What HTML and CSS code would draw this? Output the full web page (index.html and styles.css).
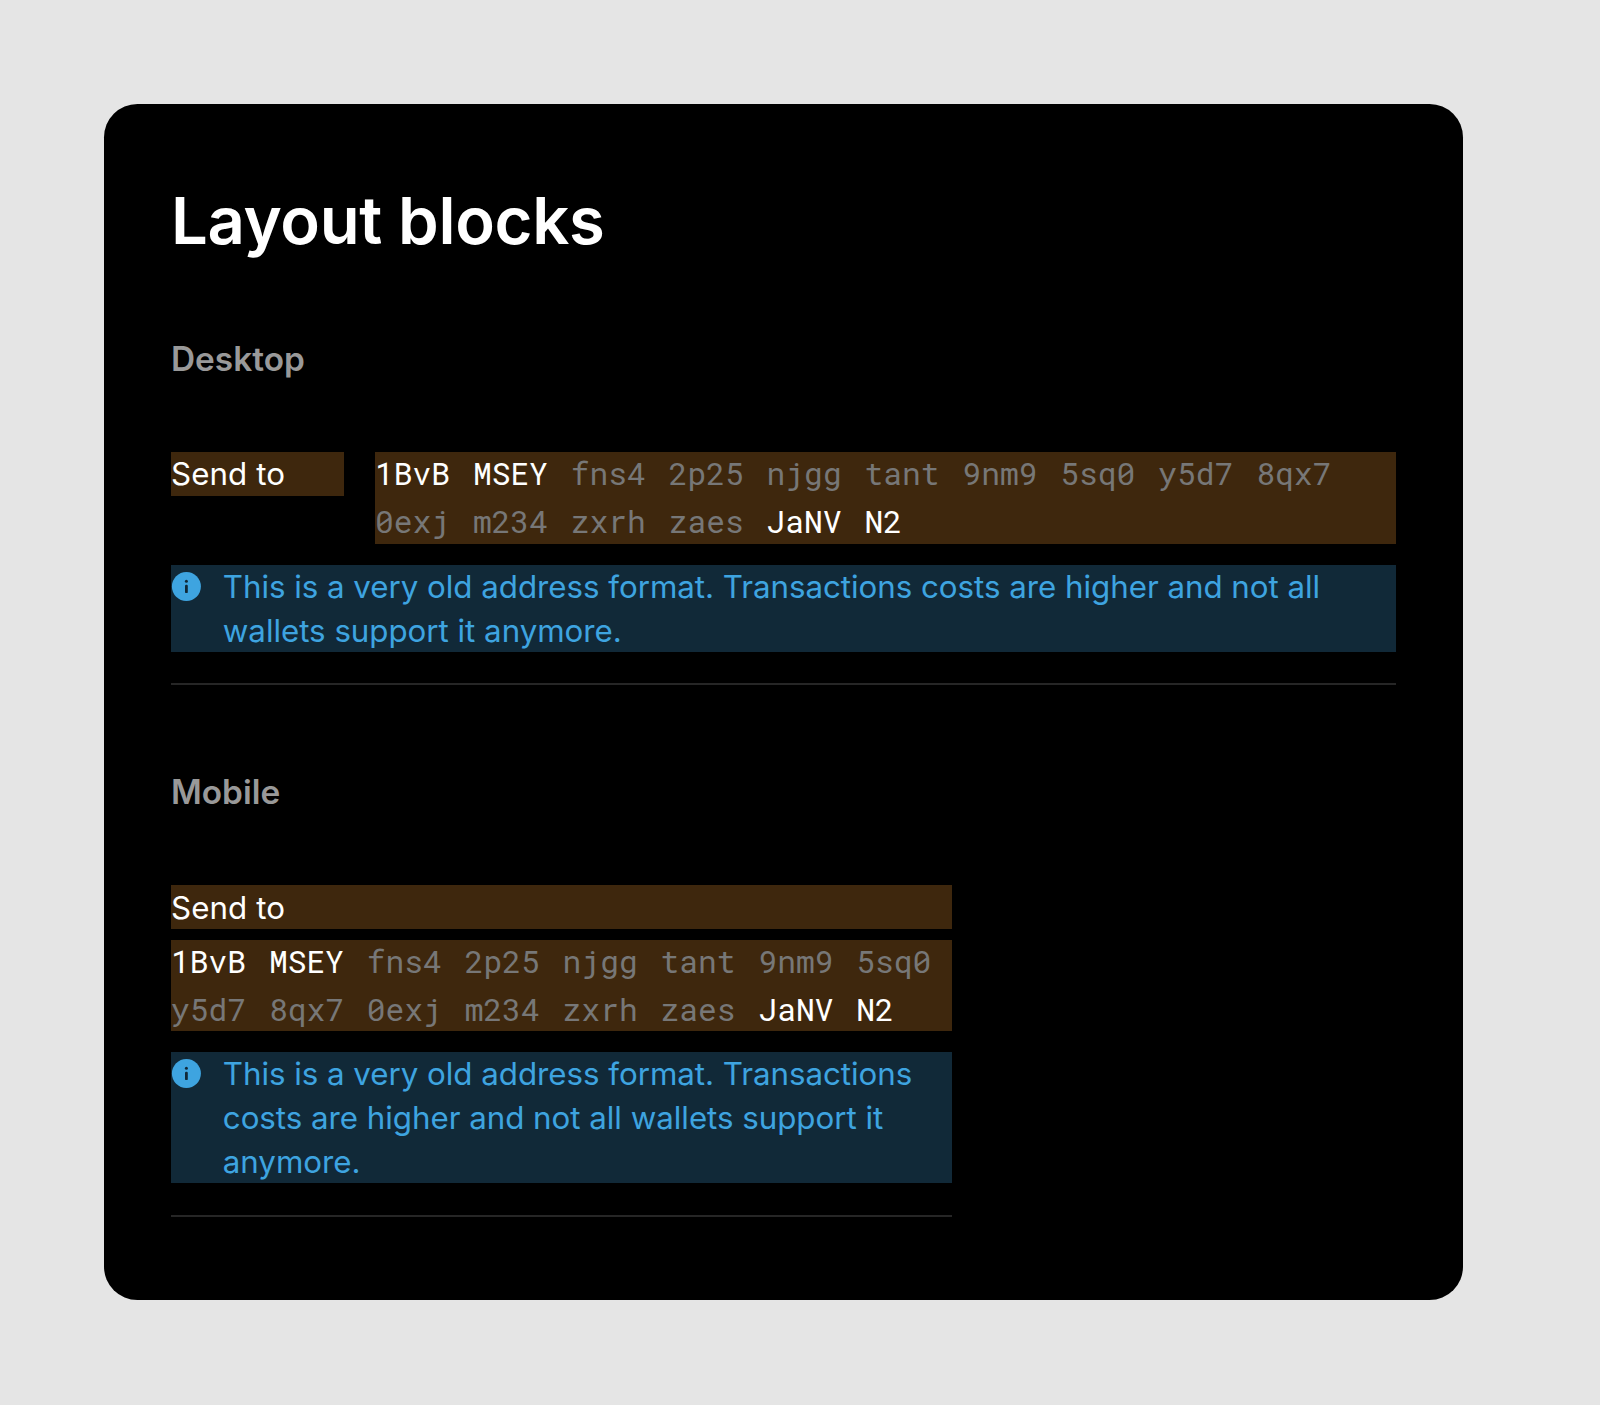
FILE: index.html
```html
<!DOCTYPE html>
<html lang="en">
<head>
<meta charset="utf-8">
<title>Layout blocks</title>
<link rel="stylesheet" href="styles.css">
</head>
<body>
<main class="card">
  <h1 class="title">Layout blocks</h1>

  <section class="block desktop">
    <h2 class="heading">Desktop</h2>
    <div class="row">
      <div class="label">Send to</div>
      <div class="address">
        <span class="strong">1BvB</span><span class="strong">MSEY</span><span>fns4</span><span>2p25</span><span>njgg</span><span>tant</span><span>9nm9</span><span>5sq0</span><span>y5d7</span><span>8qx7</span><span>0exj</span><span>m234</span><span>zxrh</span><span>zaes</span><span class="strong">JaNV</span><span class="strong">N2</span>
      </div>
    </div>
    <div class="note">
      <svg class="icon" viewBox="0 0 30 30" aria-hidden="true"><circle cx="15.4" cy="14.6" r="14.5" fill="#3ea4e0"/><circle cx="15.4" cy="9.2" r="1.5" fill="#112938"/><rect x="14" y="12.8" width="2.8" height="8.3" rx="1.2" fill="#112938"/></svg>
      <p class="message">This is a very old address format. Transactions costs are higher and not all wallets support it anymore.</p>
    </div>
  </section>

  <section class="block mobile">
    <h2 class="heading">Mobile</h2>
    <div class="row">
      <div class="label">Send to</div>
      <div class="address">
        <span class="strong">1BvB</span><span class="strong">MSEY</span><span>fns4</span><span>2p25</span><span>njgg</span><span>tant</span><span>9nm9</span><span>5sq0</span><span>y5d7</span><span>8qx7</span><span>0exj</span><span>m234</span><span>zxrh</span><span>zaes</span><span class="strong">JaNV</span><span class="strong">N2</span>
      </div>
    </div>
    <div class="note">
      <svg class="icon" viewBox="0 0 30 30" aria-hidden="true"><circle cx="15.4" cy="14.6" r="14.5" fill="#3ea4e0"/><circle cx="15.4" cy="9.2" r="1.5" fill="#112938"/><rect x="14" y="12.8" width="2.8" height="8.3" rx="1.2" fill="#112938"/></svg>
      <p class="message">This is a very old address format. Transactions costs are higher and not all wallets support it anymore.</p>
    </div>
  </section>
</main>
</body>
</html>
```

FILE: styles.css
```css
* { box-sizing: border-box; margin: 0; }

body {
  min-height: 1405px;
  padding: 104.3px;
  background: #e5e5e5;
  font-family: Inter, "Liberation Sans", sans-serif;
  font-size: 31.3px;
  line-height: 44px;
  color: #fff;
}

.card {
  width: 1358.3px;
  height: 1195.7px;
  padding: 76.7px 66.7px 0;
  border-radius: 33.4px;
  background: #000;
}

.title {
  font-size: 65.2px;
  font-weight: 600;
  line-height: 80px;
  letter-spacing: -0.005em;
}

.heading {
  margin-bottom: 73px;
  font-size: 33.4px;
  font-weight: 600;
  line-height: 40px;
  color: #999;
}

.block { border-bottom: 2px solid #262626; }
.desktop { height: 346px; margin-top: 78px; }
.mobile { width: 781.3px; height: 445px; margin-top: 86.6px; }
.mobile .heading { margin-bottom: 73.8px; }

.row { display: flex; gap: 31.3px; align-items: flex-start; }
.mobile .row { flex-direction: column; align-items: stretch; gap: 10.4px; }

.label { height: 43.8px; padding-top: 0.6px; background: #3e270d; letter-spacing: 0.003em; }
.desktop .label { flex: 0 0 172.7px; padding-top: 0; }

.address {
  flex: 1;
  display: flex;
  flex-wrap: wrap;
  gap: 4.2px 22.85px;
  background: #3e270d;
  font-family: "Roboto Mono", "DejaVu Sans Mono", monospace;
  font-size: 31.27px;
  line-height: 42.6px;
  color: #777;
}
.address span { height: 43.8px; }
.address .strong { color: #fff; }

.note {
  display: flex;
  gap: 21.8px;
  height: 87.5px;
  margin-top: 20.8px;
  background: #112938;
  color: #3ea4e0;
}
.mobile .note { height: 131.3px; }
.icon { flex: none; width: 30px; height: 30px; margin-top: 7px; }
.message { letter-spacing: -0.001em; }
```
